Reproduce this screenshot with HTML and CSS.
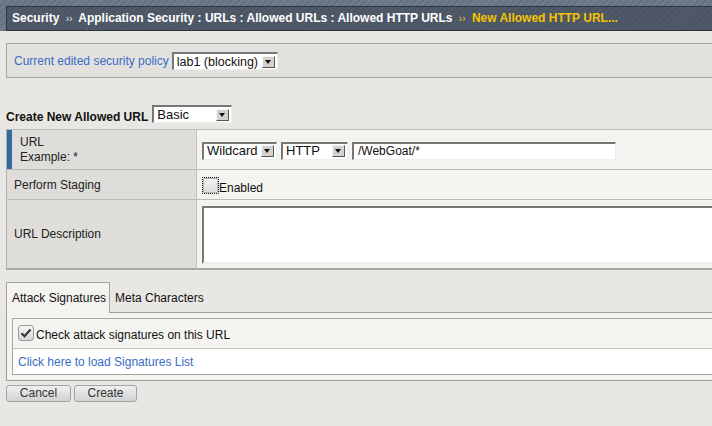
FILE: index.html
```html
<!DOCTYPE html>
<html>
<head>
<meta charset="utf-8">
<link rel="stylesheet" href="styles.css">
</head>
<body>
<div class="hdr">
  <div class="crumb">Security <span class="sep">››</span> Application Security : URLs : Allowed URLs : Allowed HTTP URLs <span class="sep sep-cur">››</span> <span class="cur">New Allowed HTTP URL...</span></div>
</div>

<div class="policy">
  <span class="plabel">Current edited security policy</span>
  <span class="sel sel-policy"><span class="sv">lab1 (blocking)</span><span class="arr"></span></span>
</div>

<div class="title">
  <span class="ttext">Create New Allowed URL</span>
  <span class="sel sel-basic"><span class="sv">Basic</span><span class="arr"></span></span>
</div>

<table class="form">
  <tr class="r1">
    <td class="lab lab-url"><div>URL</div><div>Example: *</div></td>
    <td class="val">
      <div class="urlrow">
        <span class="sel sel-wild"><span class="sv">Wildcard</span><span class="arr"></span></span>
        <span class="sel sel-http"><span class="sv">HTTP</span><span class="arr"></span></span>
        <span class="inp">/WebGoat/*</span>
      </div>
    </td>
  </tr>
  <tr class="r2">
    <td class="lab">Perform Staging</td>
    <td class="val"><span class="stage"><span class="cb"></span><span class="cbl">Enabled</span></span></td>
  </tr>
  <tr class="r3">
    <td class="lab">URL Description</td>
    <td class="val"><div class="ta"></div></td>
  </tr>
</table>

<div class="tabs">
  <span class="tab active">Attack Signatures</span>
  <span class="tab">Meta Characters</span>
</div>
<div class="panel">
  <div class="inner">
    <div class="chkrow">
      <span class="cb2"><svg width="12" height="10" viewBox="0 0 12 10"><path d="M1.5 5.2 L4.5 8.2 L10.5 1.5" fill="none" stroke="#333" stroke-width="2.2"/></svg></span>
      <span>Check attack signatures on this URL</span>
    </div>
    <div class="linkrow"><span class="link">Click here to load Signatures List</span></div>
  </div>
</div>

<div class="btns">
  <span class="btn btn-cancel">Cancel</span>
  <span class="btn btn-create">Create</span>
</div>
</body>
</html>
```

FILE: styles.css
```css
html, body {
  margin: 0;
  padding: 0;
}
body {
  background: #e9e7e3;
  font-family: "Liberation Sans", Arial, sans-serif;
  font-size: 12px;
  color: #222;
  overflow: hidden;
}

.hdr {
  height: 31px;
  padding: 6px 0 0 6px;
  box-sizing: border-box;
  background-color: #6d7c8c;
  background-image: repeating-linear-gradient(135deg, #6d7c8c 0px, #6d7c8c 3px, #65737f 3px, #65737f 5px);
}
.crumb {
  height: 25px;
  box-sizing: border-box;
  border: 1px solid #2e353f;
  border-right: none;
  background-color: #4e5866;
  background-image: repeating-linear-gradient(135deg, #4f5967 0px, #4f5967 3px, #4b5563 3px, #4b5563 5px);
  color: #ffffff;
  font-weight: bold;
  font-size: 12px;
  line-height: 23px;
  padding-left: 5px;
  white-space: nowrap;
}
.crumb .sep {
  font-weight: normal;
  font-size: 10px;
  color: #e8eaee;
  padding: 0 3px;
}
.crumb .sep-cur {
  color: #e6c24a;
}
.crumb .cur {
  color: #f5c400;
}

.policy {
  margin: 12px 0 0 6px;
  height: 35px;
  box-sizing: border-box;
  border: 1px solid #a5a4a2;
  border-right: none;
  background: #e3e1dd;
  display: flex;
  align-items: center;
  padding-left: 7px;
}
.plabel {
  color: #3a6cc6;
  margin-right: 3px;
}

/* select-like control */
.sel {
  display: inline-flex;
  align-items: center;
  box-sizing: border-box;
  height: 18px;
  background: #ffffff;
  border-top: 2px solid #777;
  border-left: 2px solid #777;
  border-bottom: 1px solid #eee;
  border-right: 1px solid #eee;
  padding-right: 2px;
  font-size: 13px;
  color: #111;
}
.sel .sv {
  flex: 1;
  padding-left: 3px;
  line-height: 14px;
  white-space: nowrap;
}
.arr {
  position: relative;
  width: 13px;
  height: 12px;
  box-sizing: border-box;
  background: #d4d2ce;
  border-top: 1px solid #f4f4f4;
  border-left: 1px solid #f4f4f4;
  border-right: 1px solid #555;
  border-bottom: 1px solid #555;
}
.arr::after {
  content: "";
  position: absolute;
  left: 2px;
  top: 3px;
  border-left: 3.5px solid transparent;
  border-right: 3.5px solid transparent;
  border-top: 4px solid #111;
}
.sel-policy { width: 106px; margin-top: 1px; font-size: 12.5px; }
.sel-basic { width: 80px; }
.sel-wild { width: 75px; }
.sel-http { width: 67px; }

.title {
  display: flex;
  align-items: flex-end;
  margin: 27px 0 0 6px;
  height: 18px;
}
.ttext {
  font-weight: bold;
  font-size: 12px;
  color: #111;
  margin-right: 4px;
  position: relative;
  top: 1px;
}

.form {
  margin: 6px 0 0 6px;
  border-collapse: separate;
  border-spacing: 0;
  width: 712px;
}
.form td {
  padding: 0;
  box-sizing: border-box;
  border-bottom: 1px solid #bdbbb8;
  vertical-align: middle;
}
.form tr.r1 td { border-top: 1px solid #bdbbb8; }
.lab {
  width: 191px;
  background: #dfddd9;
  border-left: 1px solid #b0aeaa;
  border-right: 1px solid #c4c2be;
  padding-left: 7px !important;
  color: #222;
  font-size: 12px;
}
.form td.lab-url {
  box-shadow: inset 5px 0 0 #356a9e;
  padding-left: 13px !important;
  line-height: 15px;
}
.val {
  background: #f4f3f0;
  padding-left: 5px !important;
}
.r1 td { height: 41px; }
.r2 td { height: 30px; }
.r3 td { height: 70px; }
.form tr.r3 td { border-bottom: 2px solid #a9a7a4; }

.urlrow {
  display: flex;
  align-items: center;
  gap: 4px;
  padding-top: 2px;
}
.inp {
  display: inline-block;
  box-sizing: border-box;
  width: 264px;
  height: 18px;
  background: #fff;
  border-top: 2px solid #777;
  border-left: 2px solid #777;
  border-bottom: 1px solid #eee;
  border-right: 1px solid #eee;
  font-size: 12px;
  padding-left: 4px;
  line-height: 14px;
  color: #111;
}

.stage {
  display: flex;
  align-items: flex-end;
  padding-top: 1px;
}
.cb {
  width: 17px;
  height: 17px;
  box-sizing: border-box;
  border: 1px dotted #111;
  background: linear-gradient(#f4f4f4, #dcdcdc);
  border-radius: 1px;
  box-shadow: inset 0 0 0 1px #b8b8b8;
}
.cbl {
  font-size: 12px;
  color: #111;
  position: relative;
  top: 1px;
}

.ta {
  height: 58px;
  margin-top: 1px;
  box-sizing: border-box;
  background: #fff;
  border-top: 2px solid #777;
  border-left: 2px solid #777;
  border-bottom: 2px solid #eee;
  margin-right: -10px;
}

.tabs {
  display: flex;
  align-items: flex-end;
  margin: 12px 0 0 6px;
  height: 30px;
  position: relative;
  z-index: 1;
}
.tab {
  font-size: 12px;
  color: #111;
  padding: 0 5px;
  height: 29px;
  line-height: 30px;
  box-sizing: border-box;
  white-space: nowrap;
}
.tab.active {
  width: 104px;
  height: 31px;
  padding: 0 0 0 5px;
  border: 1px solid #a6a4a1;
  border-bottom: none;
  background: #f4f3f0;
  margin-bottom: -1px;
}
.panel {
  margin-left: 6px;
  height: 69px;
  box-sizing: border-box;
  border: 1px solid #9e9c99;
  border-right: none;
  background: #f4f3f0;
  padding: 5px 0 0 5px;
}
.inner {
  height: 57px;
  box-sizing: border-box;
  border: 1px solid #a9a7a4;
  border-right: none;
  border-bottom: 2px solid #a9a7a4;
}
.chkrow {
  height: 30px;
  box-sizing: border-box;
  border-bottom: 1px solid #c8c6c3;
  background: #f5f4f1;
  display: flex;
  align-items: center;
  padding-left: 5px;
  font-size: 12px;
  color: #111;
  padding-top: 2px;
}
.cb2 {
  width: 16px;
  height: 16px;
  box-sizing: border-box;
  border: 1px solid #9a9a9a;
  border-radius: 3px;
  background: linear-gradient(#f6f6f6, #d6d6d6);
  display: inline-flex;
  align-items: center;
  justify-content: center;
  margin-right: 2px;
  position: relative;
  top: -2px;
}
.linkrow {
  height: 25px;
  background: #fff;
  display: flex;
  align-items: center;
  padding-left: 5px;
}
.link {
  color: #3a6cc6;
  font-size: 12px;
}

.btns {
  display: flex;
  gap: 3px;
  margin: 4px 0 0 6px;
}
.btn {
  box-sizing: border-box;
  height: 17px;
  border: 1px solid #a3a3a3;
  border-radius: 3px;
  background: linear-gradient(#efefef, #d3d3d3);
  color: #333;
  font-size: 12px;
  line-height: 15px;
  text-align: center;
}
.btn-cancel { width: 65px; }
.btn-create { width: 63px; }
```
